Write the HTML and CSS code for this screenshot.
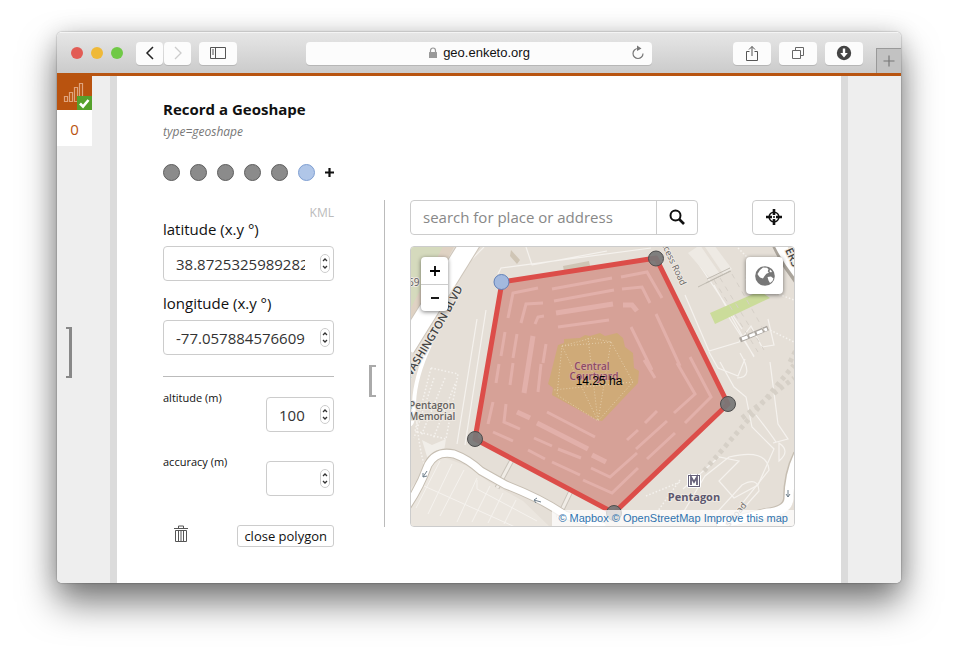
FILE: index.html
```html
<!DOCTYPE html>
<html lang="en">
<head>
<meta charset="utf-8">
<title>geo.enketo.org</title>
<link rel="stylesheet" href="styles.css">
</head>
<body>
<div class="window">
  <header class="toolbar">
    <div class="tools-left">
      <div class="lights"><i class="light red"></i><i class="light yellow"></i><i class="light green"></i></div>
      <div class="nav">
        <button class="tool half" aria-label="Back"><svg width="10" height="14" viewBox="0 0 10 14"><path d="M8 1 2 7l6 6" fill="none" stroke="#222" stroke-width="1.5"/></svg></button>
        <button class="tool half" aria-label="Forward"><svg width="10" height="14" viewBox="0 0 10 14"><path d="m2 1 6 6-6 6" fill="none" stroke="#ccc" stroke-width="1.3"/></svg></button>
      </div>
      <button class="tool" aria-label="Sidebar"><svg width="16" height="12" viewBox="0 0 16 12"><path d="M.5.5h15v11H.5zM5.5.5v11M2 3h2M2 5h2M2 7h2" fill="none" stroke="#555"/></svg></button>
    </div>
    <div class="address">
      <span></span>
      <span class="host"><svg width="10" height="12" viewBox="0 0 10 12"><path d="M2.5 5V3.5a2.5 2.5 0 0 1 5 0V5" fill="none" stroke="#999" stroke-width="1.2"/><rect x="1" y="5" width="8" height="6" rx=".5" fill="#999"/></svg>geo.enketo.org</span>
      <button class="reload" aria-label="Reload"><svg width="14" height="16" viewBox="0 0 14 16"><path d="M7 3.500a5 5 0 1 0 5 5" fill="none" stroke="#777" stroke-width="1.200"/><path d="m6 .5 4.500 3L6 6z" fill="#777"/></svg></button>
    </div>
    <div class="tools-right">
      <button class="tool" aria-label="Share"><svg width="14" height="17" viewBox="0 0 14 17"><path d="M4.500 6.500h-3v9h11v-9h-3M7 11V1.500M4 4.500l3-3 3 3" fill="none" stroke="#555"/></svg></button>
      <button class="tool" aria-label="Show tabs"><svg width="14" height="14" viewBox="0 0 14 14"><path d="M1.500 4.500h8v8h-8zM4.500 4V1.500h8v8H10" fill="none" stroke="#666"/></svg></button>
      <button class="tool" aria-label="Downloads"><svg width="16" height="16" viewBox="0 0 16 16"><circle cx="8" cy="8" r="7.200" fill="#444"/><path d="M6.800 3.500h2.400V8h2.600L8 12.500 4.200 8h2.600z" fill="#fff"/></svg></button>
      <button class="new-tab" aria-label="New tab"><svg width="12" height="12" viewBox="0 0 12 12"><path d="M6 .5v11M.5 6h11" stroke="#777" stroke-width="1.200"/></svg></button>
    </div>
  </header>

  <div class="page">
    <aside class="side">
      <div class="status">
        <svg width="22" height="22" viewBox="0 0 22 22"><path d="M1.500 15.500h3v5h-3zM6.500 11.500h3v9h-3zM11.500 6.500h3v14h-3zM16.500 2.500h3v18h-3z" fill="none" stroke="#dfa37c" stroke-width="1.200"/></svg>
        <span class="check"><svg width="15" height="14" viewBox="0 0 15 14"><path d="m3 7.500 3 3L11.500 4" fill="none" stroke="#fff" stroke-width="2.600"/></svg></span>
      </div>
      <div class="queue">0</div>
      <div class="drawer"></div>
    </aside>

    <main class="form">
      <h1>Record a Geoshape</h1>
      <p class="hint">type=geoshape</p>
      <div class="points">
        <button class="point" aria-label="Point 1"></button><button class="point" aria-label="Point 2"></button><button class="point" aria-label="Point 3"></button><button class="point" aria-label="Point 4"></button><button class="point" aria-label="Point 5"></button><button class="point active" aria-label="Point 6"></button>
        <button class="add" aria-label="Add point"><svg width="9" height="9" viewBox="0 0 9 9"><path d="M4.500 0v9M0 4.500h9" stroke="#111" stroke-width="2.200"/></svg></button>
      </div>

      <div class="columns">
        <section class="coords">
          <a class="kml" href="#">KML</a>
          <div class="field">
            <label for="lat">latitude (x.y °)</label>
            <div class="number"><input id="lat" type="number" step="any" value="38.8725325989282"><svg class="spin" viewBox="0 0 10 19"><rect x=".5" y=".5" width="9" height="18" rx="4.500"/><path d="m3 7 2-2 2 2M3 12l2 2 2-2"/></svg></div>
          </div>
          <div class="field">
            <label for="lon">longitude (x.y °)</label>
            <div class="number"><input id="lon" type="number" step="any" value="-77.0578845766099"><svg class="spin" viewBox="0 0 10 19"><rect x=".5" y=".5" width="9" height="18" rx="4.500"/><path d="m3 7 2-2 2 2M3 12l2 2 2-2"/></svg></div>
          </div>
          <div class="extras">
            <div class="row">
              <label for="alt">altitude (m)</label>
              <div class="number"><input id="alt" type="number" value="100"><svg class="spin" viewBox="0 0 10 19"><rect x=".5" y=".5" width="9" height="18" rx="4.500"/><path d="m3 7 2-2 2 2M3 12l2 2 2-2"/></svg></div>
            </div>
            <div class="row">
              <label for="acc">accuracy (m)</label>
              <div class="number"><input id="acc" type="number"><svg class="spin" viewBox="0 0 10 19"><rect x=".5" y=".5" width="9" height="18" rx="4.500"/><path d="m3 7 2-2 2 2M3 12l2 2 2-2"/></svg></div>
            </div>
          </div>
          <div class="actions">
            <button class="trash" aria-label="Remove"><svg width="14" height="18" viewBox="0 0 14 18"><path d="M0 3.500h14M4.500 3V1h5v2M1.500 5.500h11v11h-11zM4.500 6v10M7 6v10M9.500 6v10" fill="none" stroke="#555"/></svg></button>
            <button class="close">close polygon</button>
          </div>
        </section>

        <section class="map-side">
          <div class="search-row">
            <div class="search">
              <input type="text" placeholder="search for place or address" aria-label="search for place or address">
              <button aria-label="Search"><svg width="16" height="16" viewBox="0 0 16 16"><circle cx="6.500" cy="6.500" r="5" fill="none" stroke="#111" stroke-width="2"/><path d="m10 10 5 5" stroke="#111" stroke-width="2.600"/></svg></button>
            </div>
            <button class="locate" aria-label="Detect location"><svg width="18" height="18" viewBox="0 0 18 18"><circle cx="9" cy="9" r="4.800" fill="none" stroke="#111" stroke-width="1.600"/><path d="M9 1v6M9 11v6M1 9h6M11 9h6" stroke="#111" stroke-width="2.600"/><circle cx="9" cy="9" r="1" fill="#111"/></svg></button>
          </div>

          <div class="map">
            <svg class="canvas" viewBox="411 247 383 279" preserveAspectRatio="xMidYMid slice">
              <defs>
                <path id="blvd" d="M402 392Q418 366 434 340T470 274"/>
              </defs>
              <rect x="400" y="240" width="410" height="300" fill="#e5dfd7"/>
              <path d="M405 240h50L411 318h-6z" fill="#d5dabd"/>
              <path d="M452 240 405 330" stroke="#dfd2c3" stroke-width="10"/>
              <!-- paths and lots -->
              <path d="M411 488l18-24 14-7 24 9 22 16 34 19 26 25H405z" fill="#ebe6df"/>
              <g stroke="#f5f2ee" fill="none">
                <path d="m440 461-24 47M452 464l-24 50M464 470l-24 46M477 478l-20 44M490 486l-18 36M503 493l-15 30M516 500l-12 24M424 486l100 45M477 480v9l60 32" stroke-width="1"/>
                <path d="m484 247-12 12M526 247l6 18M532 265l75-14M498 274l3-6 150-20M486 310l-21 135M477 319l-20 125" stroke-width="1.200"/>
                <path d="m685 295 24 56 30-9 12-16 11 21 12-2-6-26M709 352l9 16 20 8 7-17M728 316l26 40M714 285l40 72M694 257l48 72M720 362l14 25 12 10 6 30 22 22-16 36-24 13-15-17 20-20-20-4-36 32M737 378q18 0 3-25M756 415q14 18 20 27M770 362l8 62 10 15-15 4M779 443q12 8 0 18z" stroke-width="1.200"/>
                <path d="m680 518 25-42 24-19q38-9 40 13l-32 40M710 520l32-35q16-9 17 6l-27 30" stroke-width="1.200"/>
              </g>
              <g stroke="#f5f2ee" fill="none" stroke-width="1.500" stroke-dasharray="1.500 2">
                <path d="m431 368 27 6-12 65-31-8zM415 400q4 60 13 72M434 378l-20 60M445 378l-24 58M455 384l-22 55M467 463l100 50M738 248l10 10-2 24 48 18M764 327l30 15M680 480l-25 35M646 496l34-14"/>
              </g>
              <path d="m422 440 10 5 14-6-2 12-16 9z" fill="#f1eee9"/>
              <g fill="#eeeae4">
                <path d="m688 253 12-8 20 29-11 3zM705 247l9-2 18 24-8 6z"/>
              </g>
              <path d="m511 250 9 10-3 4-7-8zM563 266l26-5 1 5-26 5z" fill="#cfc5b5"/>
              <path d="M710 313l50-22 10 7-55 26z" fill="#cbdc9a"/>
              <path d="m698 287 32-16M706 283l25-12M707 279l23-11" stroke="#c0bbb2"/>
              <path d="m740 340 28-12" stroke="#aaa59f" stroke-width="5"/><path d="m742 339 25-10" stroke="#fff" stroke-width="3" stroke-dasharray="6 2"/>
              <g stroke="#d6d0c7" stroke-width="5" stroke-dasharray="4 4" fill="none"><path d="M704 471l50-58 40-48M742 418l52-40M790 362l6-12"/></g>
              <g stroke="#d6d0c8" stroke-dasharray="5 5" fill="none"><path d="m714 280 44 72M720 278l44 72M732 274l34 60"/></g>
              <!-- roads -->
              <g fill="none">
                <path d="M472 240 405 348" stroke="#cdc5ba" stroke-width="21"/>
                <path d="M472 240 405 348" stroke="#fff" stroke-width="19"/>
                <path d="M430 345q-15 32-16 58t-5 20" stroke="#fff" stroke-width="4"/>
                <path d="m512 460-15 28M571 491l-13 27" stroke="#c9c3ba" stroke-width="5"/><path d="m512 460-15 28M571 491l-13 27" stroke="#f0ece6" stroke-width="3"/>
                <path d="M403 512q16-22 25-47 8-15 26-11 14 5 27 17l25 14q36 14 59 30l40 12" stroke="#c6beb2" stroke-width="9"/>
                <path d="M403 512q16-22 25-47 8-15 26-11 14 5 27 17l25 14q36 14 59 30l40 12" stroke="#fff" stroke-width="7"/>
                <path d="M775 238q10 24 27 45" stroke="#aaa49b" stroke-width="12"/><path d="M777 238q10 22 27 42" stroke="#fff" stroke-width="11"/>
                <path d="M798 454q-10 20-10 45-1 12-22 14l-50 12" stroke="#c6beb2" stroke-width="10"/>
                <path d="M799 454q-10 20-10 45-1 12-22 14l-50 12" stroke="#fff" stroke-width="9"/>
                <path d="m427 471-4 6m0-4v4l4-1M541 502l-7-2m3-2-3 2 2 3M788 490v7m-2-3 2 3 2-3" stroke="#70808c"/>
              </g>
              <!-- street names -->
              <g class="street">
                <text class="blvd"><textPath href="#blvd" startOffset="14">WASHINGTON BLVD</textPath></text>
                <text class="small" transform="translate(659 239) rotate(65)">Access Road</text>
                <text class="blvd" transform="translate(785 250) rotate(66)">ERS</text>
                <text class="small" transform="translate(729 527) rotate(-50)">s Road</text>
                <text x="408" y="286">69</text>
                <text class="place" x="409" y="409">Pentagon</text><text class="place" x="409" y="420">Memorial</text>
              </g>
              <!-- recorded shape -->
              <path d="m502 282 154-24 72 146-114 109-139-74z" fill="#d6a197"/>
              <g class="stripes">
                <path d="m538 288-25 5-5 25M543 303l-17 1-5 19M544 316l-6 1-3 7M552 289l60-11M554 301l60-11M558 327l51-7M505 332l-4 24M517 334l-4 24M546 344l-3 19M499 364l-3 19M513 363l-3 22M541 364l-3 28M493 402l-5 22M506 404l-2 18 16 7M493 432l20 9M547 412l48 25M534 438l18 8M558 449l23 9M528 450l17 9M552 462l28 13M583 480l29 13 26-25M591 468l19 9 27-24M621 277l26-5 15 26M622 289l20-2 8 16M656 314l24 52M631 327l21 43M644 360l11 18M677 363l18 31-21 19M690 357l21 40-26 26M627 440l11-10M645 423l12-12M636 449l31-28M647 459l28-26"/>
                <path class="wide" d="m556 313 57-9M533 336l-9 57M517 412l13 6M537 423l51 26M592 455l14 7M623 305h9l5 6"/>
              </g>
              <path d="m558 345 6-2v-4l16-1 5-3 5 1 10-3 5 3 12-3 6 5 2 9 8 6 1 15 5 3-1 12-36 38-5-1-45-25 1-7-5-4 2-7z" fill="#cfaa78"/>
              <path d="m562 346 30-8 19 4 22 40-35 39-41-26zM562 346l36 75M588 338l10 83M611 342l-13 79M633 382l-80 8M611 342l-49 4" fill="none" stroke="#e4cdaa" stroke-dasharray="1 2"/>
              <g class="court"><text x="592" y="370">Central</text><text x="594" y="380">Courtyard</text></g>
              <path d="m502 282 154-24 72 146-114 109-139-74z" fill="none" stroke="#dc4d49" stroke-width="5" stroke-linejoin="round"/>
              <g fill="#777" fill-opacity=".93" stroke="#4d4d4d"><circle cx="656" cy="258.500" r="7.500"/><circle cx="728" cy="404" r="7.500"/><circle cx="614" cy="513" r="7.500"/><circle cx="475" cy="439" r="7.500"/></g>
              <circle cx="501.500" cy="282" r="7.500" fill="#a3b9de" stroke="#6080b8"/>
              <text class="area" x="599" y="385">14.25 ha</text>
              <rect x="687" y="474" width="14" height="14" rx="2" fill="#fff"/><rect x="688.500" y="475.500" width="11" height="11" fill="none" stroke="#66617a"/>
              <path d="M691 485v-8l3 5 3-5v8" fill="none" stroke="#66617a" stroke-width="1.800"/>
              <text class="station" x="694" y="501">Pentagon</text>
            </svg>
            <div class="zoom"><button aria-label="Zoom in"><svg width="10" height="10" viewBox="0 0 10 10"><path d="M5 0v10M0 5h10" stroke="#000" stroke-width="1.800"/></svg></button><button aria-label="Zoom out"><svg width="10" height="10" viewBox="0 0 10 10"><path d="M1 5h8" stroke="#000" stroke-width="1.800"/></svg></button></div>
            <button class="layers" aria-label="Layers"><svg width="20" height="20" viewBox="0 0 20 20"><circle cx="10" cy="10" r="9.800" fill="#777"/><path d="m5 4 3-2.500 4 .2 1.500 1.600-.8 2 1.200 1.500-2.500 1-2 2.500-1.400 2.200-3-1-1.800-2.200L2.500 8zM12.500 11l3.500-.5 2.500 2-1 2.500-2.500 2-1.500-2.500zM15 3.500l2 2-1 1-1.500-1z" fill="#fff"/></svg></button>
            <div class="credits"><a href="#">© Mapbox</a> <a href="#">© OpenStreetMap</a> <a href="#">Improve this map</a></div>
          </div>
        </section>
      </div>
    </main>
  </div>
</div>
</body>
</html>
```
FILE: styles.css
```css
*, ::before { box-sizing: border-box; }
body {
  margin: 0;
  min-height: 100vh;
  padding: 32px 57px 82px;
  display: flex;
  background: #fff;
  color: #111;
  font: 15px/18px "Open Sans", sans-serif;
}
button, input { font: inherit; color: inherit; margin: 0; }
button {
  display: flex;
  align-items: center;
  justify-content: center;
  padding: 0;
  border: 0;
  background: none;
}
svg { display: block; }
a { text-decoration: none; }

.window {
  flex: 1;
  min-width: 0;
  display: flex;
  flex-direction: column;
  border-radius: 5px;
  overflow: hidden;
  box-shadow: 0 0 1px 1px rgba(0, 0, 0, .12), 0 20px 36px rgba(0, 0, 0, .5), 0 2px 24px rgba(0, 0, 0, .16);
}

/* Browser toolbar */
.toolbar {
  display: grid;
  grid-template-columns: 1fr 41% 1fr;
  align-items: center;
  height: 41px;
  background: linear-gradient(#e6e6e6, #cbcbcb);
  border-top: 1px solid #f4f4f4;
}
.tools-left { display: flex; align-items: center; padding-left: 14px; gap: 8px; }
.lights { display: flex; gap: 8px; margin-right: 5px; }
.light { width: 12px; height: 12px; border-radius: 50%; }
.red { background: #e25c55; }
.yellow { background: #efb938; }
.green { background: #70c946; }
.nav { display: flex; gap: 1px; }
.tool {
  width: 38px;
  height: 23px;
  border-radius: 4px;
  background: #fcfcfc;
  box-shadow: 0 1px 0 rgba(0, 0, 0, .12);
}
.tool.half { width: 27px; }
.address {
  display: grid;
  grid-template-columns: 1fr auto 1fr;
  align-items: center;
  height: 23px;
  border-radius: 4px;
  background: #fcfcfc;
  box-shadow: 0 1px 0 rgba(0, 0, 0, .12);
}
.host { display: flex; align-items: center; gap: 5px; font: 13px/18px "Liberation Sans", sans-serif; }
.reload { justify-self: end; margin-right: 7px; }
.tools-right { display: flex; justify-content: flex-end; align-items: center; gap: 8px; align-self: stretch; }
.new-tab {
  width: 25px;
  height: 25px;
  margin-left: 5px;
  align-self: flex-end;
  background: #c2c2c2;
  border: solid #999;
  border-width: 1px 0 0 1px;
}

/* Page frame */
.page { flex: 1; display: flex; border-top: 3px solid #b85410; background: #eee; }
.side { width: 53px; position: relative; }
.status {
  width: 35px;
  height: 34px;
  padding: 5px 6px;
  position: relative;
  background: #b9530f;
}
.check { position: absolute; right: 0; bottom: 0; background: #55a12c; }
.queue { width: 35px; height: 36px; background: #fff; color: #b9530f; text-align: center; line-height: 38px; }
.drawer {
  position: absolute;
  left: 9px;
  top: 251px;
  width: 6px;
  height: 51px;
  border: solid #888;
  border-width: 2px 3px 2px 0;
}
.form {
  flex: 1;
  min-width: 0;
  margin-right: 53px;
  padding: 21px 46px 36px;
  border: solid #dbdbdb;
  border-width: 0 7px;
  background: #fff;
}
h1 { margin: 0; font-size: 15px; line-height: 24px; font-weight: 700; }
.hint { margin: 0; font-size: 12px; line-height: 22px; font-style: italic; color: #777; }
.points { display: flex; gap: 10px; align-items: center; margin-top: 21px; }
.point { width: 17px; height: 17px; border: 1px solid #5e5e5e; border-radius: 50%; background: #8b8b8b; }
.point.active { background: #b0c6e8; border-color: #7f9fd2; }

.columns { display: flex; align-items: flex-start; margin-top: 19px; }
.coords { width: 171px; margin-right: 50px; padding-top: 5px; }
.kml { display: block; text-align: right; font-size: 12px; line-height: 16px; color: #bbb; }
.field { margin-bottom: 14px; }
.field label { display: block; line-height: 17px; margin-bottom: 8px; }
.number { position: relative; }
.number input {
  display: block;
  width: 100%;
  height: 35px;
  padding: 0 28px 0 12px;
  border: 1px solid #ccc;
  border-radius: 4px;
  background: #fff;
  color: #333;
  font-size: 15px;
  appearance: textfield;
}
.number input::-webkit-inner-spin-button { display: none; }
.spin { position: absolute; right: 4px; top: 8px; width: 10px; height: 19px; fill: #fff; stroke: #ccc; }
.spin path { fill: none; stroke: #333; stroke-width: 1.3; }
.extras { margin-top: 21px; border-top: 1px solid #bbb; padding-top: 20px; }
.row { display: flex; justify-content: space-between; align-items: flex-start; margin-bottom: 29px; }
.row label { display: block; font-size: 11px; line-height: 1; margin-top: -5px; }
.row .number { width: 68px; }
.actions { display: flex; justify-content: space-between; align-items: flex-start; padding-left: 11px; }
.close { height: 22px; padding: 0 6px; border: 1px solid #ccc; border-radius: 3px; font-size: 13px; }

/* Map column */
.map-side { flex: 1; min-width: 0; position: relative; padding-left: 25px; border-left: 1px solid #bbb; }
.map-side::before {
  content: "";
  position: absolute;
  left: -16px;
  top: 165px;
  width: 7px;
  height: 32px;
  border: solid #aaa;
  border-width: 2px 0 2px 3px;
}
.search-row { display: flex; justify-content: space-between; margin-bottom: 11px; }
.search { display: flex; width: 288px; height: 35px; border: 1px solid #ccc; border-radius: 4px; }
.search input { flex: 1; min-width: 0; padding: 0 12px 2px; border: 0; border-right: 1px solid #ccc; background: none; font-size: 15px; }
.search input::placeholder { color: #888; }
.search button { width: 40px; padding-bottom: 2px; }
.locate { width: 43px; height: 35px; padding-bottom: 2px; border: 1px solid #ccc; border-radius: 4px; }
.map { position: relative; border: 1px solid #ccc; border-radius: 4px; overflow: hidden; }
.canvas { width: 100%; aspect-ratio: 383 / 279; }
.zoom, .layers {
  position: absolute;
  top: 10px;
  border-radius: 4px;
  background: #fff;
  box-shadow: 0 1px 4px rgba(0, 0, 0, .5);
}
.zoom { left: 10px; width: 27px; }
.zoom button { width: 100%; height: 27px; }
.zoom button + button { border-top: 1px solid #ccc; }
.layers { right: 11px; width: 37px; height: 37px; }
.credits {
  position: absolute;
  right: 0;
  bottom: 0;
  padding: 0 6px;
  background: rgba(255, 255, 255, .75);
  font: 11px/16px "Liberation Sans", sans-serif;
}
.credits a { color: #2f73ae; }

/* Map lettering and building texture */
.stripes { fill: none; stroke: #e2b0aa; stroke-width: 3px; }
.stripes .wide { stroke-width: 5px; }
.street text, .court text, .station { paint-order: stroke; stroke: #eee9e2; stroke-width: 2px; }
.street text { fill: #65625f; font-size: 10px; }
.street .blvd { font-size: 11px; font-weight: 600; fill: #444; }
.street .small { font-size: 9px; }
.street .place { font-size: 10px; font-weight: 600; }
.court text { fill: #8c4a63; stroke: #d8ada0; stroke-width: 1px; font-size: 10px; font-weight: 600; text-anchor: middle; }
.station { fill: #5c576f; font-size: 11px; font-weight: 700; text-anchor: middle; }
.area { font: 12px "Liberation Sans", sans-serif; text-anchor: middle; }
```
